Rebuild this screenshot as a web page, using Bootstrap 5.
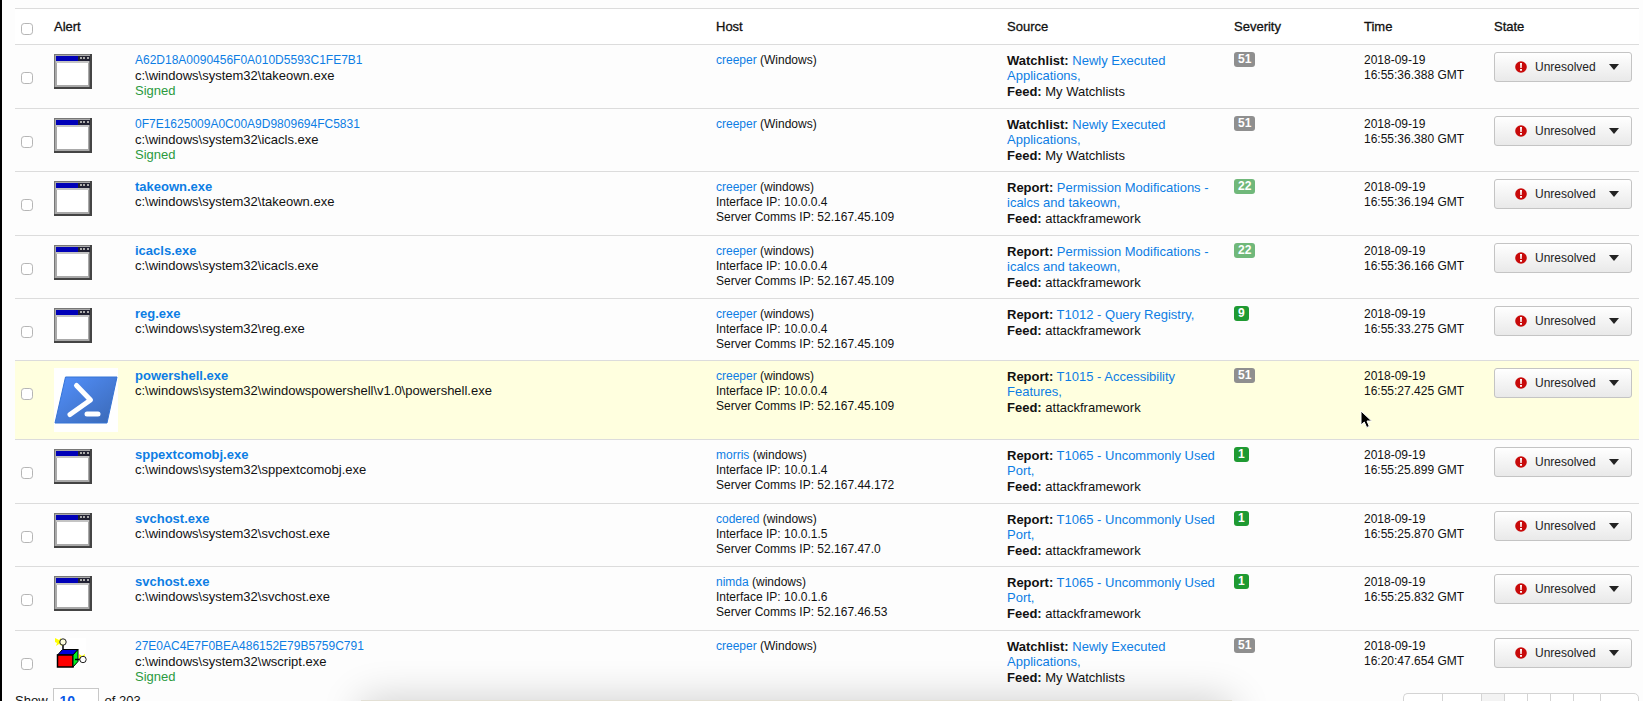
<!DOCTYPE html>
<html lang="en">
<head>
<meta charset="utf-8">
<meta name="viewport" content="width=device-width, initial-scale=1">
<title>Triage Alerts</title>
<link href="https://cdn.jsdelivr.net/npm/bootstrap@5.3.0/dist/css/bootstrap.min.css" rel="stylesheet">
<style>
html { height: 100%; overflow: hidden; }
body {
  height: 100%; overflow: hidden; background: #fdfdfd; color: #111;
  font-family: "Liberation Sans", Arial, sans-serif; font-size: 13px; line-height: 15px;
  border-left: 2px solid #000;
}
a { color: #0d7de4; text-decoration: none; }
.alerts-wrap { padding: 8px 4px 0 13px; }
.alerts { table-layout: fixed; margin: 0; --bs-table-bg: transparent; --bs-table-color: #111; border-color: #ddd; }
.alerts > :not(caption) > * > * { padding: 7px 6px; border-bottom: 0; border-top: 1px solid #dcdcdc; vertical-align: top; }
.alerts > thead > tr > th { height: 36px; padding-top: 10px; background: #fff; font-weight: 500; -webkit-text-stroke: 0.3px #111; }
.alerts > tbody { border-top: 0; }
.alerts > tbody > tr { height: 64px; }
.alerts > tbody > tr:nth-child(even) { height: 63px; }
.alerts > tbody > tr:nth-child(5) { height: 62px; }
.alerts > tbody > tr:last-child { height: 56px; }
.alerts > tbody > tr > .src, .alerts > tbody > tr > .compact { padding-top: 8px; }
.alerts > tbody > tr:last-child > td { padding-bottom: 0; }
.feed { margin-top: 1px; }
.alerts > tbody > tr.hot > td { background: #ffffdf; }
.alerts > tbody > tr > .tick { padding-top: 27px; }
.alerts > thead > tr > .tick { padding-top: 14px; }
.tick input { margin: 0; width: 12px; height: 12px; border: 1px solid #b5b5b5; border-radius: 3px; display: block; background-color: #fff; }
.pic svg { display: block; }
.c-tick { width: 33px; } .c-pic { width: 81px; } .c-host { width: 291px; }
.c-src { width: 227px; } .c-sev { width: 130px; } .c-time { width: 130px; } .c-state { width: 151px; }
.signed { color: #2b9a3e; }
.compact { font-size: 12px; }
.sev { display: block; width: fit-content; color: #fff; font-weight: bold; font-size: 12px; line-height: 15px; padding: 0 4px; border-radius: 3px; }
.s-gray { background: #8f8f8f; } .s-lite { background: #70b87a; } .s-green { background: #1f9a32; }
.state-btn { width: 138px; height: 30px; padding: 0 12px 0 20px; border: 1px solid #c4c4c4; border-radius: 3px; background: linear-gradient(#fff, #e9e9e9); color: #222; font-size: 12px; line-height: 15px; }
.pager-foot { padding-top: 1px; }
.per-page { width: 46px; height: 26px; margin: 0 6px 0 5px; border: 1px solid #c8c8c8; border-radius: 0; background: #fff; color: #0a58e8; font: bold 14px/16px "Liberation Sans", Arial, sans-serif; padding: 0 6px; appearance: none; }
.pages { margin: 5px 0 0; }
.pages a { display: block; height: 30px; border: 1px solid #d4d4d4; border-right: 0; background: #fff; }
.pages li:first-child a { border-radius: 5px 0 0 5px; }
.pages li:last-child a { border-right: 1px solid #d4d4d4; border-radius: 0 5px 5px 0; }
.pages .w-a { width: 39px; } .pages .w-b { width: 23px; } .pages .w-c { width: 27px; }
.pages .on { background: #f3f3f3; }
.pointer { position: absolute; left: 1360px; top: 410px; }
.dock-shade { position: absolute; left: 22%; right: 25%; top: 700px; height: 40px; background: #e3e0d5; box-shadow: 0 0 40px rgba(0,0,0,.2); }
</style>
</head>
<body>
<svg width="0" height="0" class="position-absolute" aria-hidden="true">
  <symbol id="i-win" viewBox="0 0 38 38">
    <path fill="#a9a9a9" d="M0 2h38v35H0z"/><path fill="#777" d="M0 2h38v1H0zM0 2h1v35H0z"/>
    <path fill="#444" d="M36 2h2v35h-2zM0 35h38v2H0z"/><path fill="#777" d="M35 9h1v26h-1z"/>
    <path fill="#0000b8" d="M2 4h33v5H2z"/><path fill="#223" d="M24 4h12v5H24z"/>
    <path fill="#aaa" d="M26 5h2v2h-2zM29 5h2v2h-2zM33 5h2v2h-2z"/>
    <path fill="#c4c4c4" d="M2 9h33v2H2z"/><path fill="#fff" d="M3 11h31v22H3z"/>
  </symbol>
  <symbol id="i-alert" viewBox="0 0 12 12"><circle cx="6" cy="6" r="5.8" fill="#c80a0a"/><path d="M5 2h2l-.3 5H5.300zM5 8h2v1.800H5z" fill="#fff"/></symbol>
</svg>

<main class="alerts-wrap">
<table class="table alerts">
  <colgroup><col class="c-tick"><col class="c-pic"><col><col class="c-host"><col class="c-src"><col class="c-sev"><col class="c-time"><col class="c-state"></colgroup>
  <thead><tr>
    <th class="tick"><input type="checkbox" class="form-check-input" aria-label="Select all"></th>
    <th colspan="2">Alert</th><th>Host</th><th>Source</th><th>Severity</th><th>Time</th><th>State</th>
  </tr></thead>
  <tbody id="rows"></tbody>
</table>
<footer class="pager-foot d-flex justify-content-between align-items-start">
  <div class="d-flex align-items-center">
    <label for="per">Show</label>
    <select id="per" class="per-page"><option>10</option></select>
    <span>of 203</span>
  </div>
  <ul class="pages list-unstyled d-flex">
    <li><a href="#" class="w-a" aria-label="First"></a></li><li><a href="#" class="w-a" aria-label="Previous"></a></li>
    <li><a href="#" class="w-b on" aria-label="Page 1"></a></li><li><a href="#" class="w-b" aria-label="Page 2"></a></li>
    <li><a href="#" class="w-b" aria-label="Page 3"></a></li><li><a href="#" class="w-b" aria-label="Page 4"></a></li>
    <li><a href="#" class="w-c" aria-label="Next"></a></li><li><a href="#" class="w-a" aria-label="Last"></a></li>
  </ul>
</footer>
</main>
<div class="dock-shade"></div>
<svg class="pointer" width="14" height="20" viewBox="0 0 14 20" aria-hidden="true"><path d="M1 1v14l3.300-3 2.400 5.500 2.600-1.100L7 11h4.600z" fill="#000" stroke="#fff" stroke-width="1"/></svg>

<script>
const win = '<svg width="38" height="38"><use href="#i-win"/></svg>';
const shell = `<svg width="64" height="64" viewBox="0 0 64 64"><defs><linearGradient id="ps" x1="0" y1="0" x2="1" y2="1"><stop offset="0" stop-color="#5391fe"/><stop offset="1" stop-color="#3a68b4"/></linearGradient></defs>
<path fill="#fff" d="M0 0h64v64H0z"/><path fill="url(#ps)" stroke="#3574d6" d="M11.500 9H63L53 55H1z"/><path d="M22.500 17.500L36.500 32 16 46.500" fill="none" stroke="#fff" stroke-width="5" stroke-linecap="round" stroke-linejoin="round"/><path d="M33 46H44" stroke="#fff" stroke-width="5" stroke-linecap="round"/></svg>`;
const cube = `<svg width="38" height="38" viewBox="0 0 38 38"><path fill="#fff" d="M2 0h30v32H2z"/>
<path fill="#ff0" d="M1 0l4 2 2-2 1 8-3-2-3 2 1-3-2-1zM25 16l3 2 3-2-1 5-5 1z"/>
<path fill="#00d" stroke="#000" d="M3.500 17l5-5.500h15.500L19 17z"/><path fill="#f00" stroke="#000" stroke-width="1.500" d="M3.500 17H19v12H3.500z"/><path fill="#0e2" stroke="#000" d="M19 17l5-5.500v12L19 29z"/>
<path d="M9 11V6M21 21.500h5" stroke="#000" stroke-width="1.500"/><circle cx="9" cy="4" r="3.200" fill="#ffd" stroke="#222"/><circle cx="29" cy="21.500" r="3.200" fill="#fff" stroke="#222"/></svg>`;
const sys = 'c:\\windows\\system32\\';
const W = ['Watchlist', 'Newly Executed Applications,', 'My Watchlists'];
const rep = t => ['Report', t, 'attackframework'];
const perm = rep('Permission Modifications - icalcs and takeown,'), port = rep('T1065 - Uncommonly Used Port,');
// name, path, host, interface IP, server IP, source, severity, time
const data = [
  ['A62D18A0090456F0A010D5593C1FE7B1','takeown.exe','creeper','','',W,51,'16:55:36.388'],
  ['0F7E1625009A0C00A9D9809694FC5831','icacls.exe','creeper','','',W,51,'16:55:36.380'],
  ['takeown.exe','takeown.exe','creeper','10.0.0.4','52.167.45.109',perm,22,'16:55:36.194'],
  ['icacls.exe','icacls.exe','creeper','10.0.0.4','52.167.45.109',perm,22,'16:55:36.166'],
  ['reg.exe','reg.exe','creeper','10.0.0.4','52.167.45.109',rep('T1012 - Query Registry,'),9,'16:55:33.275'],
  ['powershell.exe','windowspowershell\\v1.0\\powershell.exe','creeper','10.0.0.4','52.167.45.109',rep('T1015 - Accessibility Features,'),51,'16:55:27.425'],
  ['sppextcomobj.exe','sppextcomobj.exe','morris','10.0.1.4','52.167.44.172',port,1,'16:55:25.899'],
  ['svchost.exe','svchost.exe','codered','10.0.1.5','52.167.47.0',port,1,'16:55:25.870'],
  ['svchost.exe','svchost.exe','nimda','10.0.1.6','52.167.46.53',port,1,'16:55:25.832'],
  ['27E0AC4E7F0BEA486152E79B5759C791','wscript.exe','creeper','','',W,51,'16:20:47.654']
];
document.getElementById('rows').innerHTML = data.map(([name, path, host, ip, srv, src, sev, time]) => {
  const icon = name === 'powershell.exe' ? shell : path === 'wscript.exe' ? cube : win;
  const tone = sev > 50 ? 's-gray' : sev > 20 ? 's-lite' : 's-green';
  return `<tr class="${name === 'powershell.exe' ? 'hot' : ''}">
  <td class="tick"><input type="checkbox" class="form-check-input" aria-label="Select ${name}"></td>
  <td class="pic">${icon}</td>
  <td><div><a href="#" class="${ip ? 'fw-bold' : 'compact'}">${name}</a></div><div>${sys}${path}</div>${ip ? '' : '<div class="signed">Signed</div>'}</td>
  <td class="compact"><a href="#">${host}</a> ${ip ? `(windows)<br>Interface IP: ${ip}<br>Server Comms IP: ${srv}` : '(Windows)'}</td>
  <td class="src"><div><b>${src[0]}:</b> <a href="#">${src[1]}</a></div><div class="feed"><b>Feed:</b> ${src[2]}</div></td>
  <td><span class="sev ${tone}">${sev}</span></td>
  <td class="compact">2018-09-19<br>${time} GMT</td>
  <td><button type="button" class="btn state-btn d-flex align-items-center"><svg width="12" height="12" class="me-2"><use href="#i-alert"/></svg>Unresolved<svg class="ms-auto" width="10" height="6" viewBox="0 0 10 6"><path d="M0 0h10L5 6z" fill="#222"/></svg></button></td></tr>`;
}).join('');
</script>
<script src="https://cdn.jsdelivr.net/npm/bootstrap@5.3.0/dist/js/bootstrap.bundle.min.js"></script>
</body>
</html>
